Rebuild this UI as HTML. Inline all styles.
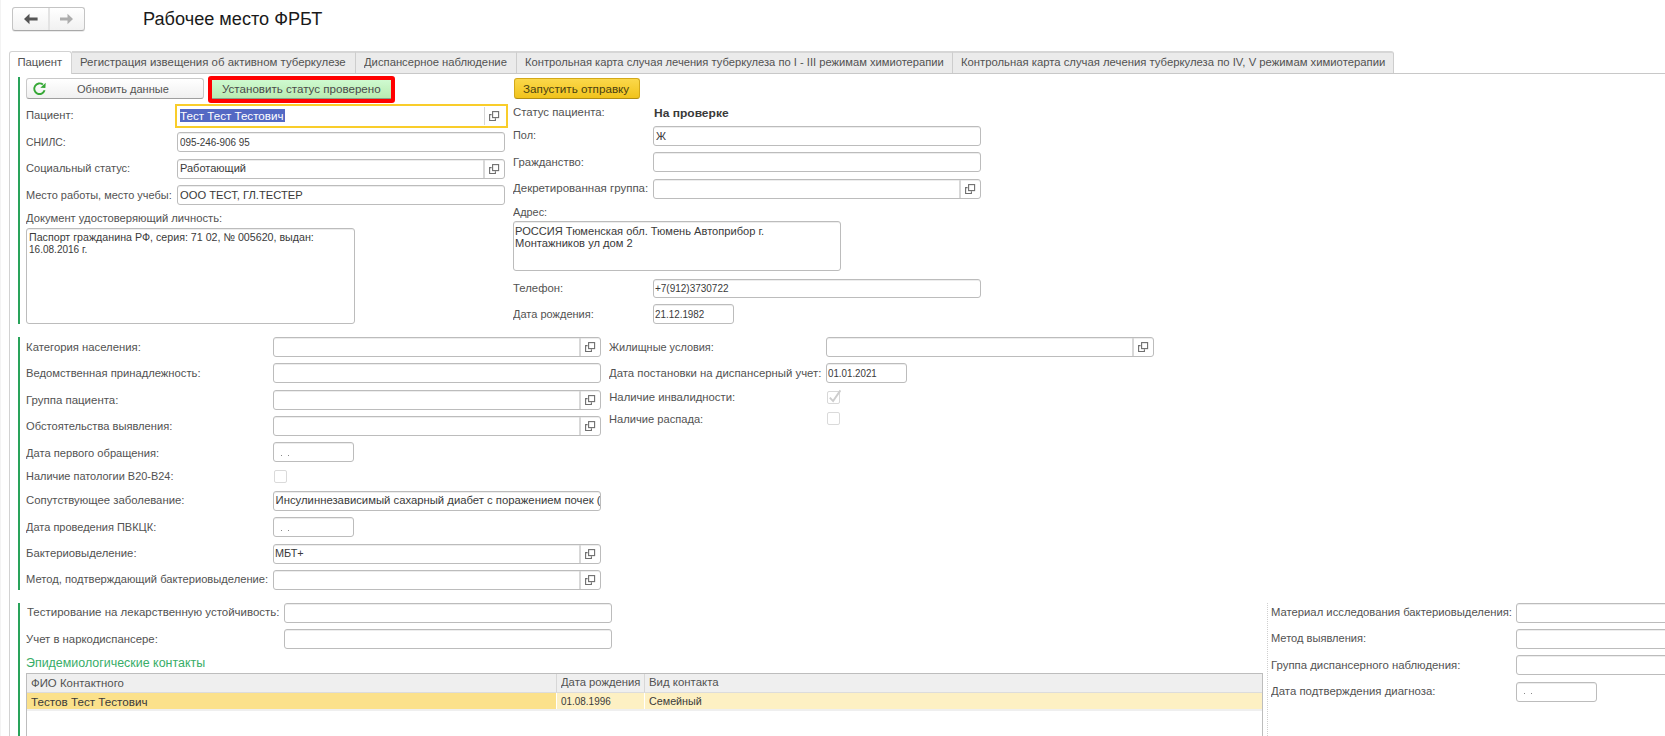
<!DOCTYPE html>
<html><head><meta charset="utf-8"><title>Рабочее место ФРБТ</title>
<style>
html,body{margin:0;padding:0;background:#fff;}
body{width:1665px;height:736px;position:relative;overflow:hidden;font-family:'Liberation Sans', sans-serif;}
</style></head><body>
<div style="position:absolute;left:0px;top:0px;width:1px;height:736px;background:#f3f3f3"></div>
<div style="position:absolute;left:12px;top:7px;width:73px;height:24px;box-sizing:border-box;border:1px solid #c4c4c4;border-bottom-color:#a9a9a9;border-radius:3px;background:linear-gradient(#ffffff,#f1f1f1);box-shadow:0 1px 0 rgba(0,0,0,0.08)"></div>
<div style="position:absolute;left:48px;top:8px;width:2px;height:22px;background:#e3e3e3"></div>
<svg width="16" height="12" viewBox="0 0 16 12" style="position:absolute;left:23px;top:13px"><path d="M1 6 L6.5 0.8 V4.6 H14.6 V7.4 H6.5 V11.2 Z" fill="#555"/></svg>
<svg width="16" height="12" viewBox="0 0 16 12" style="position:absolute;left:58.2px;top:13px"><path d="M15 6 L9.5 0.8 V4.6 H2 V7.4 H9.5 V11.2 Z" fill="#adadad"/></svg>
<span style="position:absolute;left:142.60px;top:7.86px;line-height:22px;font-size:18px;color:#1a1a1a;font-weight:normal;white-space:nowrap;transform:scaleX(1.0080);transform-origin:0 0;">Рабочее место ФРБТ</span>
<div style="position:absolute;left:9px;top:55px;width:1px;height:681px;background:#d2d2d2"></div>
<div style="position:absolute;left:9px;top:51px;width:63px;height:23px;box-sizing:border-box;border:1px solid #d2d2d2;border-bottom:none;border-radius:3px 3px 0 0;background:#fff"></div>
<div style="position:absolute;left:72px;top:51px;width:284px;height:23px;box-sizing:border-box;background:#ebebeb;border-top:2px solid #d6d6d6;border-right:1px solid #cdcdcd;border-radius:0"></div>
<span style="position:absolute;left:79.90px;top:55.08px;line-height:14px;font-size:11.3px;color:#525252;font-weight:normal;white-space:nowrap;transform:scaleX(1.0116);transform-origin:0 0;">Регистрация извещения об активном туберкулезе</span>
<div style="position:absolute;left:356px;top:51px;width:161px;height:23px;box-sizing:border-box;background:#ebebeb;border-top:2px solid #d6d6d6;border-right:1px solid #cdcdcd;border-radius:0"></div>
<span style="position:absolute;left:363.90px;top:55.08px;line-height:14px;font-size:11.3px;color:#525252;font-weight:normal;white-space:nowrap;transform:scaleX(0.9964);transform-origin:0 0;">Диспансерное наблюдение</span>
<div style="position:absolute;left:517px;top:51px;width:436px;height:23px;box-sizing:border-box;background:#ebebeb;border-top:2px solid #d6d6d6;border-right:1px solid #cdcdcd;border-radius:0"></div>
<span style="position:absolute;left:524.90px;top:55.08px;line-height:14px;font-size:11.3px;color:#525252;font-weight:normal;white-space:nowrap;transform:scaleX(0.9888);transform-origin:0 0;">Контрольная карта случая лечения туберкулеза по I - III режимам химиотерапии</span>
<div style="position:absolute;left:953px;top:51px;width:441px;height:23px;box-sizing:border-box;background:#ebebeb;border-top:2px solid #d6d6d6;border-right:1px solid #cdcdcd;border-radius:0 3px 0 0"></div>
<span style="position:absolute;left:960.90px;top:55.08px;line-height:14px;font-size:11.3px;color:#525252;font-weight:normal;white-space:nowrap;">Контрольная карта случая лечения туберкулеза по IV, V режимам химиотерапии</span>
<div style="position:absolute;left:72px;top:73px;width:1593px;height:1px;background:#c8c8c8"></div>
<span style="position:absolute;left:17.40px;top:55.08px;line-height:14px;font-size:11.3px;color:#525252;font-weight:normal;white-space:nowrap;">Пациент</span>
<div style="position:absolute;left:18px;top:77px;width:2px;height:247px;background:#29a35a"></div>
<div style="position:absolute;left:18px;top:337px;width:2px;height:253px;background:#29a35a"></div>
<div style="position:absolute;left:18px;top:603px;width:2px;height:133px;background:#29a35a"></div>
<div style="position:absolute;left:26px;top:78px;width:178px;height:21px;box-sizing:border-box;border:1px solid #c9c9c9;border-bottom-color:#9f9f9f;border-radius:3px;background:linear-gradient(#ffffff,#f0f0f0)"></div>
<svg width="16" height="16" viewBox="0 0 16 16" style="position:absolute;left:32px;top:81px"><path d="M12.6 9.3 A5.3 5.3 0 1 1 10.9 3.6" fill="none" stroke="#36a836" stroke-width="1.9"/><path d="M13.7 1.7 L13.4 7.1 L8.3 6.7 Z" fill="#36a836"/></svg>
<span style="position:absolute;left:77.30px;top:81.68px;line-height:14px;font-size:11.3px;color:#525252;font-weight:normal;white-space:nowrap;transform:scaleX(0.9761);transform-origin:0 0;">Обновить данные</span>
<div style="position:absolute;left:208px;top:76px;width:187px;height:27px;box-sizing:border-box;border:4.5px solid #ff0000;border-radius:3px;background:#fff"></div>
<div style="position:absolute;left:212px;top:80px;width:179px;height:19px;box-sizing:border-box;border-bottom:1px solid #8c9f89;background:linear-gradient(#cffad0,#b8ebb1)"></div>
<span style="position:absolute;left:222.00px;top:81.68px;line-height:14px;font-size:11.3px;color:#4a4a4a;font-weight:normal;white-space:nowrap;transform:scaleX(1.0252);transform-origin:0 0;">Установить статус проверено</span>
<div style="position:absolute;left:514px;top:78px;width:126px;height:21px;box-sizing:border-box;border:1px solid #d3a91a;border-bottom-color:#b28e12;border-radius:3px;background:linear-gradient(#fbd84a,#f1c31c)"></div>
<span style="position:absolute;left:523.20px;top:81.68px;line-height:14px;font-size:11.3px;color:#4a3f10;font-weight:normal;white-space:nowrap;transform:scaleX(1.0342);transform-origin:0 0;">Запустить отправку</span>
<span style="position:absolute;left:26.10px;top:108.48px;line-height:14px;font-size:11.3px;color:#525252;font-weight:normal;white-space:nowrap;transform:scaleX(0.9931);transform-origin:0 0;">Пациент:</span>
<div style="position:absolute;left:175px;top:104px;width:333px;height:24px;box-sizing:border-box;border:2px solid #f9cd2a;background:#fff"></div>
<div style="position:absolute;left:484px;top:107px;width:1px;height:18px;background:#d6d6d6"></div>
<svg width="12" height="12" viewBox="0 0 12 12" style="position:absolute;left:489px;top:111px"><rect x="3.6" y="0.6" width="6" height="6" fill="none" stroke="#6e6e6e" stroke-width="1.1"/><path d="M2.6 3.6 H0.6 V9.5 H6.4 V7.2" fill="none" stroke="#6e6e6e" stroke-width="1.1"/></svg>
<div style="position:absolute;left:180px;top:109px;width:105px;height:13px;background:#5469c4"></div>
<span style="position:absolute;left:180.10px;top:108.68px;line-height:14px;font-size:11.3px;color:#ffffff;font-weight:normal;white-space:nowrap;transform:scaleX(1.0273);transform-origin:0 0;">Тест Тест Тестович</span>
<span style="position:absolute;left:26.10px;top:134.68px;line-height:14px;font-size:11.3px;color:#525252;font-weight:normal;white-space:nowrap;transform:scaleX(0.9199);transform-origin:0 0;">СНИЛС:</span>
<div style="position:absolute;left:177px;top:132px;width:328px;height:20px;box-sizing:border-box;border:1px solid #bcbcbc;border-radius:3px;background:#fff;box-shadow:inset 0 1px 0 rgba(0,0,0,0.07)"></div>
<span style="position:absolute;left:179.60px;top:134.88px;line-height:14px;font-size:11.3px;color:#3a3a3a;font-weight:normal;white-space:nowrap;transform:scaleX(0.8736);transform-origin:0 0;">095-246-906 95</span>
<span style="position:absolute;left:26.10px;top:161.08px;line-height:14px;font-size:11.3px;color:#525252;font-weight:normal;white-space:nowrap;transform:scaleX(0.9817);transform-origin:0 0;">Социальный статус:</span>
<div style="position:absolute;left:177px;top:159px;width:328px;height:20px;box-sizing:border-box;border:1px solid #bcbcbc;border-radius:3px;background:#fff;box-shadow:inset 0 1px 0 rgba(0,0,0,0.07)"></div>
<div style="position:absolute;left:483px;top:160px;width:1.6px;height:18px;background:#d8d8d8"></div>
<svg width="12" height="12" viewBox="0 0 12 12" style="position:absolute;left:489px;top:164px"><rect x="3.6" y="0.6" width="6" height="6" fill="none" stroke="#6e6e6e" stroke-width="1.1"/><path d="M2.6 3.6 H0.6 V9.5 H6.4 V7.2" fill="none" stroke="#6e6e6e" stroke-width="1.1"/></svg>
<span style="position:absolute;left:179.60px;top:161.28px;line-height:14px;font-size:11.3px;color:#3a3a3a;font-weight:normal;white-space:nowrap;transform:scaleX(0.9753);transform-origin:0 0;">Работающий</span>
<span style="position:absolute;left:26.10px;top:187.68px;line-height:14px;font-size:11.3px;color:#525252;font-weight:normal;white-space:nowrap;transform:scaleX(0.9702);transform-origin:0 0;">Место работы, место учебы:</span>
<div style="position:absolute;left:177px;top:185px;width:328px;height:20px;box-sizing:border-box;border:1px solid #bcbcbc;border-radius:3px;background:#fff;box-shadow:inset 0 1px 0 rgba(0,0,0,0.07)"></div>
<span style="position:absolute;left:179.60px;top:187.88px;line-height:14px;font-size:11.3px;color:#3a3a3a;font-weight:normal;white-space:nowrap;transform:scaleX(0.9905);transform-origin:0 0;">ООО ТЕСТ, ГЛ.ТЕСТЕР</span>
<span style="position:absolute;left:25.70px;top:211.48px;line-height:14px;font-size:11.3px;color:#525252;font-weight:normal;white-space:nowrap;transform:scaleX(0.9929);transform-origin:0 0;">Документ удостоверяющий личность:</span>
<div style="position:absolute;left:26px;top:228px;width:329px;height:96px;box-sizing:border-box;border:1px solid #bcbcbc;border-radius:3px;background:#fff;box-shadow:inset 0 1px 0 rgba(0,0,0,0.07)"></div>
<span style="position:absolute;left:28.80px;top:229.78px;line-height:14px;font-size:11.3px;color:#3a3a3a;font-weight:normal;white-space:nowrap;transform:scaleX(0.9447);transform-origin:0 0;">Паспорт гражданина РФ, серия: 71 02, № 005620, выдан:</span>
<span style="position:absolute;left:28.80px;top:242.08px;line-height:14px;font-size:11.3px;color:#3a3a3a;font-weight:normal;white-space:nowrap;transform:scaleX(0.8877);transform-origin:0 0;">16.08.2016 г.</span>
<span style="position:absolute;left:513.10px;top:105.08px;line-height:14px;font-size:11.3px;color:#525252;font-weight:normal;white-space:nowrap;transform:scaleX(1.0084);transform-origin:0 0;">Статус пациента:</span>
<span style="position:absolute;left:653.60px;top:105.68px;line-height:14px;font-size:11.3px;color:#3a3a3a;font-weight:bold;white-space:nowrap;transform:scaleX(1.0638);transform-origin:0 0;">На проверке</span>
<span style="position:absolute;left:513.10px;top:128.48px;line-height:14px;font-size:11.3px;color:#525252;font-weight:normal;white-space:nowrap;transform:scaleX(0.9627);transform-origin:0 0;">Пол:</span>
<div style="position:absolute;left:653px;top:126px;width:328px;height:20px;box-sizing:border-box;border:1px solid #bcbcbc;border-radius:3px;background:#fff;box-shadow:inset 0 1px 0 rgba(0,0,0,0.07)"></div>
<span style="position:absolute;left:655.60px;top:128.68px;line-height:14px;font-size:11.3px;color:#3a3a3a;font-weight:normal;white-space:nowrap;transform:scaleX(0.9581);transform-origin:0 0;">Ж</span>
<span style="position:absolute;left:513.10px;top:154.68px;line-height:14px;font-size:11.3px;color:#525252;font-weight:normal;white-space:nowrap;">Гражданство:</span>
<div style="position:absolute;left:653px;top:152px;width:328px;height:20px;box-sizing:border-box;border:1px solid #bcbcbc;border-radius:3px;background:#fff;box-shadow:inset 0 1px 0 rgba(0,0,0,0.07)"></div>
<span style="position:absolute;left:513.10px;top:181.48px;line-height:14px;font-size:11.3px;color:#525252;font-weight:normal;white-space:nowrap;transform:scaleX(1.0175);transform-origin:0 0;">Декретированная группа:</span>
<div style="position:absolute;left:653px;top:179px;width:328px;height:20px;box-sizing:border-box;border:1px solid #bcbcbc;border-radius:3px;background:#fff;box-shadow:inset 0 1px 0 rgba(0,0,0,0.07)"></div>
<div style="position:absolute;left:959px;top:180px;width:1.6px;height:18px;background:#d8d8d8"></div>
<svg width="12" height="12" viewBox="0 0 12 12" style="position:absolute;left:965px;top:184px"><rect x="3.6" y="0.6" width="6" height="6" fill="none" stroke="#6e6e6e" stroke-width="1.1"/><path d="M2.6 3.6 H0.6 V9.5 H6.4 V7.2" fill="none" stroke="#6e6e6e" stroke-width="1.1"/></svg>
<span style="position:absolute;left:513.10px;top:204.88px;line-height:14px;font-size:11.3px;color:#525252;font-weight:normal;white-space:nowrap;transform:scaleX(0.9610);transform-origin:0 0;">Адрес:</span>
<div style="position:absolute;left:513px;top:221px;width:328px;height:50px;box-sizing:border-box;border:1px solid #bcbcbc;border-radius:3px;background:#fff;box-shadow:inset 0 1px 0 rgba(0,0,0,0.07)"></div>
<span style="position:absolute;left:515.40px;top:223.68px;line-height:14px;font-size:11.3px;color:#3a3a3a;font-weight:normal;white-space:nowrap;transform:scaleX(0.9819);transform-origin:0 0;">РОССИЯ Тюменская обл. Тюмень Автоприбор г.</span>
<span style="position:absolute;left:515.40px;top:236.18px;line-height:14px;font-size:11.3px;color:#3a3a3a;font-weight:normal;white-space:nowrap;transform:scaleX(0.9884);transform-origin:0 0;">Монтажников ул дом 2</span>
<span style="position:absolute;left:513.10px;top:280.98px;line-height:14px;font-size:11.3px;color:#525252;font-weight:normal;white-space:nowrap;">Телефон:</span>
<div style="position:absolute;left:653px;top:279px;width:328px;height:19px;box-sizing:border-box;border:1px solid #bcbcbc;border-radius:3px;background:#fff;box-shadow:inset 0 1px 0 rgba(0,0,0,0.07)"></div>
<span style="position:absolute;left:655.30px;top:281.28px;line-height:14px;font-size:11.3px;color:#3a3a3a;font-weight:normal;white-space:nowrap;transform:scaleX(0.8830);transform-origin:0 0;">+7(912)3730722</span>
<span style="position:absolute;left:513.10px;top:306.88px;line-height:14px;font-size:11.3px;color:#525252;font-weight:normal;white-space:nowrap;transform:scaleX(0.9753);transform-origin:0 0;">Дата рождения:</span>
<div style="position:absolute;left:653px;top:304px;width:81px;height:20px;box-sizing:border-box;border:1px solid #bcbcbc;border-radius:3px;background:#fff;box-shadow:inset 0 1px 0 rgba(0,0,0,0.07)"></div>
<span style="position:absolute;left:655.30px;top:306.98px;line-height:14px;font-size:11.3px;color:#3a3a3a;font-weight:normal;white-space:nowrap;transform:scaleX(0.8718);transform-origin:0 0;">21.12.1982</span>
<span style="position:absolute;left:26.10px;top:340.08px;line-height:14px;font-size:11.3px;color:#525252;font-weight:normal;white-space:nowrap;">Категория населения:</span>
<div style="position:absolute;left:273px;top:337px;width:328px;height:20px;box-sizing:border-box;border:1px solid #bcbcbc;border-radius:3px;background:#fff;box-shadow:inset 0 1px 0 rgba(0,0,0,0.07)"></div>
<div style="position:absolute;left:579px;top:338px;width:1.6px;height:18px;background:#d8d8d8"></div>
<svg width="12" height="12" viewBox="0 0 12 12" style="position:absolute;left:585px;top:342px"><rect x="3.6" y="0.6" width="6" height="6" fill="none" stroke="#6e6e6e" stroke-width="1.1"/><path d="M2.6 3.6 H0.6 V9.5 H6.4 V7.2" fill="none" stroke="#6e6e6e" stroke-width="1.1"/></svg>
<span style="position:absolute;left:26.10px;top:366.08px;line-height:14px;font-size:11.3px;color:#525252;font-weight:normal;white-space:nowrap;transform:scaleX(0.9932);transform-origin:0 0;">Ведомственная принадлежность:</span>
<div style="position:absolute;left:273px;top:363px;width:328px;height:20px;box-sizing:border-box;border:1px solid #bcbcbc;border-radius:3px;background:#fff;box-shadow:inset 0 1px 0 rgba(0,0,0,0.07)"></div>
<span style="position:absolute;left:26.10px;top:392.58px;line-height:14px;font-size:11.3px;color:#525252;font-weight:normal;white-space:nowrap;transform:scaleX(1.0140);transform-origin:0 0;">Группа пациента:</span>
<div style="position:absolute;left:273px;top:390px;width:328px;height:20px;box-sizing:border-box;border:1px solid #bcbcbc;border-radius:3px;background:#fff;box-shadow:inset 0 1px 0 rgba(0,0,0,0.07)"></div>
<div style="position:absolute;left:579px;top:391px;width:1.6px;height:18px;background:#d8d8d8"></div>
<svg width="12" height="12" viewBox="0 0 12 12" style="position:absolute;left:585px;top:395px"><rect x="3.6" y="0.6" width="6" height="6" fill="none" stroke="#6e6e6e" stroke-width="1.1"/><path d="M2.6 3.6 H0.6 V9.5 H6.4 V7.2" fill="none" stroke="#6e6e6e" stroke-width="1.1"/></svg>
<span style="position:absolute;left:26.10px;top:419.08px;line-height:14px;font-size:11.3px;color:#525252;font-weight:normal;white-space:nowrap;transform:scaleX(0.9856);transform-origin:0 0;">Обстоятельства выявления:</span>
<div style="position:absolute;left:273px;top:416px;width:328px;height:20px;box-sizing:border-box;border:1px solid #bcbcbc;border-radius:3px;background:#fff;box-shadow:inset 0 1px 0 rgba(0,0,0,0.07)"></div>
<div style="position:absolute;left:579px;top:417px;width:1.6px;height:18px;background:#d8d8d8"></div>
<svg width="12" height="12" viewBox="0 0 12 12" style="position:absolute;left:585px;top:421px"><rect x="3.6" y="0.6" width="6" height="6" fill="none" stroke="#6e6e6e" stroke-width="1.1"/><path d="M2.6 3.6 H0.6 V9.5 H6.4 V7.2" fill="none" stroke="#6e6e6e" stroke-width="1.1"/></svg>
<span style="position:absolute;left:26.10px;top:445.68px;line-height:14px;font-size:11.3px;color:#525252;font-weight:normal;white-space:nowrap;transform:scaleX(0.9868);transform-origin:0 0;">Дата первого обращения:</span>
<div style="position:absolute;left:273px;top:442px;width:81px;height:20px;box-sizing:border-box;border:1px solid #bcbcbc;border-radius:3px;background:#fff;box-shadow:inset 0 1px 0 rgba(0,0,0,0.07)"></div>
<div style="position:absolute;left:281px;top:455px;width:1px;height:1px;background:#888"></div>
<div style="position:absolute;left:288px;top:455px;width:1px;height:1px;background:#888"></div>
<span style="position:absolute;left:26.10px;top:468.88px;line-height:14px;font-size:11.3px;color:#525252;font-weight:normal;white-space:nowrap;transform:scaleX(0.9692);transform-origin:0 0;">Наличие патологии В20-В24:</span>
<div style="position:absolute;left:274px;top:470px;width:13px;height:13px;box-sizing:border-box;border:1px solid #dadada;border-radius:2px;background:#fff"></div>
<span style="position:absolute;left:26.10px;top:493.08px;line-height:14px;font-size:11.3px;color:#525252;font-weight:normal;white-space:nowrap;transform:scaleX(1.0045);transform-origin:0 0;">Сопутствующее заболевание:</span>
<div style="position:absolute;left:273px;top:491px;width:328px;height:20px;box-sizing:border-box;border:1px solid #bcbcbc;border-radius:3px;background:#fff;box-shadow:inset 0 1px 0 rgba(0,0,0,0.07)"></div>
<span style="position:absolute;left:26.10px;top:519.68px;line-height:14px;font-size:11.3px;color:#525252;font-weight:normal;white-space:nowrap;transform:scaleX(0.9735);transform-origin:0 0;">Дата проведения ПВКЦК:</span>
<div style="position:absolute;left:273px;top:517px;width:81px;height:20px;box-sizing:border-box;border:1px solid #bcbcbc;border-radius:3px;background:#fff;box-shadow:inset 0 1px 0 rgba(0,0,0,0.07)"></div>
<div style="position:absolute;left:281px;top:530px;width:1px;height:1px;background:#888"></div>
<div style="position:absolute;left:288px;top:530px;width:1px;height:1px;background:#888"></div>
<span style="position:absolute;left:26.10px;top:545.78px;line-height:14px;font-size:11.3px;color:#525252;font-weight:normal;white-space:nowrap;">Бактериовыделение:</span>
<div style="position:absolute;left:273px;top:544px;width:328px;height:20px;box-sizing:border-box;border:1px solid #bcbcbc;border-radius:3px;background:#fff;box-shadow:inset 0 1px 0 rgba(0,0,0,0.07)"></div>
<div style="position:absolute;left:579px;top:545px;width:1.6px;height:18px;background:#d8d8d8"></div>
<svg width="12" height="12" viewBox="0 0 12 12" style="position:absolute;left:585px;top:549px"><rect x="3.6" y="0.6" width="6" height="6" fill="none" stroke="#6e6e6e" stroke-width="1.1"/><path d="M2.6 3.6 H0.6 V9.5 H6.4 V7.2" fill="none" stroke="#6e6e6e" stroke-width="1.1"/></svg>
<span style="position:absolute;left:26.10px;top:572.08px;line-height:14px;font-size:11.3px;color:#525252;font-weight:normal;white-space:nowrap;transform:scaleX(0.9884);transform-origin:0 0;">Метод, подтверждающий бактериовыделение:</span>
<div style="position:absolute;left:273px;top:570px;width:328px;height:20px;box-sizing:border-box;border:1px solid #bcbcbc;border-radius:3px;background:#fff;box-shadow:inset 0 1px 0 rgba(0,0,0,0.07)"></div>
<div style="position:absolute;left:579px;top:571px;width:1.6px;height:18px;background:#d8d8d8"></div>
<svg width="12" height="12" viewBox="0 0 12 12" style="position:absolute;left:585px;top:575px"><rect x="3.6" y="0.6" width="6" height="6" fill="none" stroke="#6e6e6e" stroke-width="1.1"/><path d="M2.6 3.6 H0.6 V9.5 H6.4 V7.2" fill="none" stroke="#6e6e6e" stroke-width="1.1"/></svg>
<div style="position:absolute;left:274px;top:493.38px;width:326px;height:14px;overflow:hidden"><span style="position:absolute;left:1.60px;top:0;line-height:14px;font-size:11.3px;color:#3a3a3a;font-weight:normal;white-space:nowrap;">Инсулиннезависимый сахарный диабет с поражением почек (</span></div>
<span style="position:absolute;left:275.20px;top:546.08px;line-height:14px;font-size:11.3px;color:#3a3a3a;font-weight:normal;white-space:nowrap;transform:scaleX(0.9622);transform-origin:0 0;">МБТ+</span>
<span style="position:absolute;left:609.20px;top:339.88px;line-height:14px;font-size:11.3px;color:#525252;font-weight:normal;white-space:nowrap;transform:scaleX(0.9662);transform-origin:0 0;">Жилищные условия:</span>
<div style="position:absolute;left:826px;top:337px;width:328px;height:20px;box-sizing:border-box;border:1px solid #bcbcbc;border-radius:3px;background:#fff;box-shadow:inset 0 1px 0 rgba(0,0,0,0.07)"></div>
<div style="position:absolute;left:1132px;top:338px;width:1.6px;height:18px;background:#d8d8d8"></div>
<svg width="12" height="12" viewBox="0 0 12 12" style="position:absolute;left:1138px;top:342px"><rect x="3.6" y="0.6" width="6" height="6" fill="none" stroke="#6e6e6e" stroke-width="1.1"/><path d="M2.6 3.6 H0.6 V9.5 H6.4 V7.2" fill="none" stroke="#6e6e6e" stroke-width="1.1"/></svg>
<span style="position:absolute;left:609.20px;top:366.08px;line-height:14px;font-size:11.3px;color:#525252;font-weight:normal;white-space:nowrap;transform:scaleX(1.0063);transform-origin:0 0;">Дата постановки на диспансерный учет:</span>
<div style="position:absolute;left:826px;top:363px;width:81px;height:20px;box-sizing:border-box;border:1px solid #bcbcbc;border-radius:3px;background:#fff;box-shadow:inset 0 1px 0 rgba(0,0,0,0.07)"></div>
<span style="position:absolute;left:828.10px;top:366.28px;line-height:14px;font-size:11.3px;color:#3a3a3a;font-weight:normal;white-space:nowrap;transform:scaleX(0.8630);transform-origin:0 0;">01.01.2021</span>
<span style="position:absolute;left:609.20px;top:390.28px;line-height:14px;font-size:11.3px;color:#525252;font-weight:normal;white-space:nowrap;">Наличие инвалидности:</span>
<div style="position:absolute;left:827px;top:391px;width:13px;height:13px;box-sizing:border-box;border:1px solid #d8d8d8;border-radius:2px;background:#fff"></div>
<svg width="14" height="14" viewBox="0 0 14 14" style="position:absolute;left:827px;top:391px;overflow:visible"><path d="M2.8 6.6 L6.1 10.1 L13.4 -0.6" fill="none" stroke="#cdcdcd" stroke-width="1.9"/></svg>
<span style="position:absolute;left:609.20px;top:412.38px;line-height:14px;font-size:11.3px;color:#525252;font-weight:normal;white-space:nowrap;transform:scaleX(0.9854);transform-origin:0 0;">Наличие распада:</span>
<div style="position:absolute;left:827px;top:412px;width:13px;height:13px;box-sizing:border-box;border:1px solid #dadada;border-radius:2px;background:#fff"></div>
<span style="position:absolute;left:26.70px;top:604.78px;line-height:14px;font-size:11.3px;color:#525252;font-weight:normal;white-space:nowrap;transform:scaleX(1.0165);transform-origin:0 0;">Тестирование на лекарственную устойчивость:</span>
<div style="position:absolute;left:284px;top:603px;width:328px;height:20px;box-sizing:border-box;border:1px solid #bcbcbc;border-radius:3px;background:#fff;box-shadow:inset 0 1px 0 rgba(0,0,0,0.07)"></div>
<span style="position:absolute;left:26.10px;top:631.58px;line-height:14px;font-size:11.3px;color:#525252;font-weight:normal;white-space:nowrap;transform:scaleX(1.0049);transform-origin:0 0;">Учет в наркодиспансере:</span>
<div style="position:absolute;left:284px;top:629px;width:328px;height:20px;box-sizing:border-box;border:1px solid #bcbcbc;border-radius:3px;background:#fff;box-shadow:inset 0 1px 0 rgba(0,0,0,0.07)"></div>
<span style="position:absolute;left:25.90px;top:655.84px;line-height:15px;font-size:12.3px;color:#38ad68;font-weight:normal;white-space:nowrap;transform:scaleX(1.0110);transform-origin:0 0;">Эпидемиологические контакты</span>
<div style="position:absolute;left:26px;top:673px;width:1237px;height:63px;box-sizing:border-box;border:1px solid #bdbdbd;border-bottom:none;background:#fff"></div>
<div style="position:absolute;left:27px;top:674px;width:1235px;height:18px;background:#efefef;border-bottom:1px solid #dcdcdc"></div>
<div style="position:absolute;left:556px;top:674px;width:1px;height:18px;background:#d7d7d7"></div>
<div style="position:absolute;left:644px;top:674px;width:1px;height:18px;background:#d7d7d7"></div>
<div style="position:absolute;left:27px;top:693px;width:529px;height:16px;background:#fbe18b"></div>
<div style="position:absolute;left:557px;top:693px;width:87px;height:16px;background:#fdf0c3"></div>
<div style="position:absolute;left:645px;top:693px;width:617px;height:16px;background:#fdf0c3"></div>
<div style="position:absolute;left:27px;top:709px;width:1235px;height:2px;background:#efefef"></div>
<span style="position:absolute;left:31.10px;top:675.58px;line-height:14px;font-size:11.3px;color:#525252;font-weight:normal;white-space:nowrap;transform:scaleX(1.0098);transform-origin:0 0;">ФИО Контактного</span>
<span style="position:absolute;left:560.60px;top:675.28px;line-height:14px;font-size:11.3px;color:#525252;font-weight:normal;white-space:nowrap;transform:scaleX(0.9962);transform-origin:0 0;">Дата рождения</span>
<span style="position:absolute;left:649.00px;top:675.28px;line-height:14px;font-size:11.3px;color:#525252;font-weight:normal;white-space:nowrap;transform:scaleX(1.0101);transform-origin:0 0;">Вид контакта</span>
<span style="position:absolute;left:31.40px;top:694.88px;line-height:14px;font-size:11.3px;color:#3a3a3a;font-weight:normal;white-space:nowrap;transform:scaleX(1.0327);transform-origin:0 0;">Тестов Тест Тестович</span>
<span style="position:absolute;left:560.60px;top:694.38px;line-height:14px;font-size:11.3px;color:#3a3a3a;font-weight:normal;white-space:nowrap;transform:scaleX(0.8789);transform-origin:0 0;">01.08.1996</span>
<span style="position:absolute;left:649.00px;top:694.38px;line-height:14px;font-size:11.3px;color:#3a3a3a;font-weight:normal;white-space:nowrap;transform:scaleX(0.9516);transform-origin:0 0;">Семейный</span>
<div style="position:absolute;left:1267px;top:603px;width:0px;height:133px;border-left:1px dotted #cfcfcf"></div>
<span style="position:absolute;left:1270.50px;top:604.78px;line-height:14px;font-size:11.3px;color:#525252;font-weight:normal;white-space:nowrap;transform:scaleX(0.9969);transform-origin:0 0;">Материал исследования бактериовыделения:</span>
<div style="position:absolute;left:1516px;top:603px;width:200px;height:20px;box-sizing:border-box;border:1px solid #bcbcbc;border-radius:3px;background:#fff;box-shadow:inset 0 1px 0 rgba(0,0,0,0.07)"></div>
<span style="position:absolute;left:1270.50px;top:631.08px;line-height:14px;font-size:11.3px;color:#525252;font-weight:normal;white-space:nowrap;transform:scaleX(0.9812);transform-origin:0 0;">Метод выявления:</span>
<div style="position:absolute;left:1516px;top:629px;width:200px;height:20px;box-sizing:border-box;border:1px solid #bcbcbc;border-radius:3px;background:#fff;box-shadow:inset 0 1px 0 rgba(0,0,0,0.07)"></div>
<span style="position:absolute;left:1270.50px;top:657.88px;line-height:14px;font-size:11.3px;color:#525252;font-weight:normal;white-space:nowrap;transform:scaleX(1.0061);transform-origin:0 0;">Группа диспансерного наблюдения:</span>
<div style="position:absolute;left:1516px;top:655px;width:200px;height:20px;box-sizing:border-box;border:1px solid #bcbcbc;border-radius:3px;background:#fff;box-shadow:inset 0 1px 0 rgba(0,0,0,0.07)"></div>
<span style="position:absolute;left:1270.50px;top:684.08px;line-height:14px;font-size:11.3px;color:#525252;font-weight:normal;white-space:nowrap;transform:scaleX(1.0082);transform-origin:0 0;">Дата подтверждения диагноза:</span>
<div style="position:absolute;left:1516px;top:682px;width:81px;height:20px;box-sizing:border-box;border:1px solid #bcbcbc;border-radius:3px;background:#fff;box-shadow:inset 0 1px 0 rgba(0,0,0,0.07)"></div>
<div style="position:absolute;left:1524px;top:693px;width:1px;height:1px;background:#888"></div>
<div style="position:absolute;left:1531px;top:693px;width:1px;height:1px;background:#888"></div>
</body></html>
